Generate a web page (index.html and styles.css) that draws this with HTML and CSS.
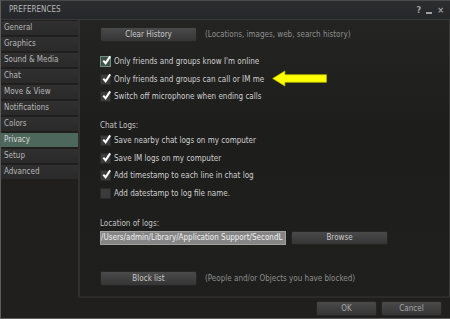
FILE: index.html
```html
<!DOCTYPE html>
<html>
<head>
<meta charset="utf-8">
<link rel="stylesheet" href="styles.css">
</head>
<body>
<div class="window">
  <div class="titlebar">
    <span class="title">PREFERENCES</span>
    <span class="controls"><span class="ctl">?</span><span class="ctl min"></span><span class="ctl">×</span></span>
  </div>
  <div class="main">
    <div class="tabs">
      <div class="tab">General</div>
      <div class="tab">Graphics</div>
      <div class="tab">Sound &amp; Media</div>
      <div class="tab">Chat</div>
      <div class="tab">Move &amp; View</div>
      <div class="tab">Notifications</div>
      <div class="tab">Colors</div>
      <div class="tab active">Privacy</div>
      <div class="tab">Setup</div>
      <div class="tab">Advanced</div>
    </div>
    <div class="panel">
      <div class="row-btn">
        <div class="btn wide">Clear History</div>
        <span class="hint">(Locations, images, web, search history)</span>
      </div>
      <div class="group g1">
        <div class="check"><span class="box focus"><svg viewBox="0 0 12 12"><path d="M2.5 6.2 L5 9 L10 1.5"/></svg></span>Only friends and groups know I'm online</div>
        <div class="check"><span class="box"><svg viewBox="0 0 12 12"><path d="M2.5 6.2 L5 9 L10 1.5"/></svg></span>Only friends and groups can call or IM me</div>
        <div class="check"><span class="box"><svg viewBox="0 0 12 12"><path d="M2.5 6.2 L5 9 L10 1.5"/></svg></span>Switch off microphone when ending calls</div>
      </div>
      <div class="label chatlogs">Chat Logs:</div>
      <div class="group">
        <div class="check"><span class="box"><svg viewBox="0 0 12 12"><path d="M2.5 6.2 L5 9 L10 1.5"/></svg></span>Save nearby chat logs on my computer</div>
        <div class="check"><span class="box"><svg viewBox="0 0 12 12"><path d="M2.5 6.2 L5 9 L10 1.5"/></svg></span>Save IM logs on my computer</div>
        <div class="check"><span class="box"><svg viewBox="0 0 12 12"><path d="M2.5 6.2 L5 9 L10 1.5"/></svg></span>Add timestamp to each line in chat log</div>
        <div class="check"><span class="box"></span>Add datestamp to log file name.</div>
      </div>
      <div class="label location">Location of logs:</div>
      <div class="row-input">
        <div class="input">/Users/admin/Library/Application Support/SecondL</div>
        <div class="btn wide">Browse</div>
      </div>
      <div class="row-btn block">
        <div class="btn wide">Block list</div>
        <span class="hint">(People and/or Objects you have blocked)</span>
      </div>
      <svg class="arrow" viewBox="0 0 60 18"><polygon points="1,9 14,1 14,5 58,5 58,13 14,13 14,17"/></svg>
    </div>
  </div>
  <div class="footer">
    <div class="btn small">OK</div>
    <div class="btn small">Cancel</div>
  </div>
</div>
</body>
</html>
```
FILE: styles.css
```css
html, body {
  margin: 0;
  padding: 0;
  background: #1f1f1e;
}
body {
  width: 450px;
  height: 319px;
  overflow: hidden;
  font-family: "DejaVu Sans Condensed", "DejaVu Sans", sans-serif;
  font-size: 8px;
  color: #d2d2d2;
}
.window {
  width: 449px;
  height: 318px;
  border-left: 1px solid #5c5c5c;
  border-bottom: 1px solid #5c5c5c;
  display: flex;
  flex-direction: column;
  background: #201f1e;
}
.titlebar {
  border-top: 1px solid #4a4a4b;
  border-bottom: 1px solid #3a3a3b;
  background: linear-gradient(#2c2d2f, #26272a);
  display: flex;
  align-items: center;
  justify-content: space-between;
  padding: 0 6px 0 8px;
  box-sizing: border-box;
  height: 20px;
}
.title {
  font-size: 8px;
  color: #b8b8b8;
  padding-bottom: 2px;
}
.controls {
  display: flex;
  align-items: center;
  gap: 5px;
  color: #a0a0a0;
  font-weight: bold;
  font-size: 9px;
}
.ctl.min {
  width: 6px;
  height: 2px;
  background: #a0a0a0;
  margin-top: 5px;
}
.main {
  display: flex;
  flex: 1;
  min-height: 0;
}
.tabs {
  width: 77px;
  display: flex;
  flex-direction: column;
  gap: 2px;
  padding-top: 1px;
}
.tab {
  height: 14px;
  line-height: 14px;
  padding-left: 3px;
  background: linear-gradient(#303030, #2a2a2a);
  color: #b8b8b8;
  font-size: 8px;
}
.tab.active {
  background: #4e675c;
  color: #d8d8d8;
}
.panel {
  position: relative;
  flex: 1;
  margin-bottom: 1px;
  border-left: 2px solid #303030;
  border-right: 1px solid #3a3a3a;
  border-bottom: 2px solid #2a2a2a;
  background: linear-gradient(#242423, #1d1d1c 40%, #1f1f1e);
  padding: 7px 0 0 20px;
  display: flex;
  flex-direction: column;
  align-items: flex-start;
}
.btn {
  box-sizing: border-box;
  height: 15px;
  line-height: 13px;
  text-align: center;
  color: #c8c8c8;
  background: linear-gradient(#4a4a4a, #353535);
  border: 1px solid #252525;
  border-radius: 2px;
  font-size: 8px;
}
.btn.wide { width: 97px; }
.btn.small { width: 61px; }
.row-btn {
  display: flex;
  align-items: center;
  gap: 8px;
}
.hint {
  color: #8e8e8e;
}
.group {
  display: flex;
  flex-direction: column;
}
.g1 { margin-top: 11px; }
.check {
  height: 17.6px;
  display: flex;
  align-items: center;
  color: #d0d0d0;
}
.box {
  position: relative;
  box-sizing: border-box;
  width: 11px;
  height: 11px;
  margin-right: 3px;
  background: #3b3b3b;
  border: 1px solid #2a2a2a;
}
.box.focus {
  background: #3f5148;
  border: 1px solid #6f8f80;
}
.box svg {
  position: absolute;
  left: 0;
  top: -2px;
  width: 11px;
  height: 11px;
  fill: none;
  stroke: #ffffff;
  stroke-width: 2.2;
}
.label {
  color: #c4c4c4;
  height: 12px;
  line-height: 12px;
}
.chatlogs { margin-top: 14px; }
.location { margin-top: 16px; }
.row-input {
  display: flex;
  align-items: center;
  gap: 5px;
  margin-top: 1px;
}
.input {
  box-sizing: border-box;
  width: 186px;
  height: 14px;
  line-height: 12px;
  background: #858585;
  border: 1px solid #a0a0a0;
  color: #f0f0f0;
  overflow: hidden;
  white-space: nowrap;
}
.row-input .btn { height: 14px; line-height: 12px; }
.row-btn.block { margin-top: 26px; }
.arrow {
  position: absolute;
  left: 191px;
  top: 50px;
  width: 58px;
  height: 17px;
  fill: #ffff00;
  stroke: #b8b800;
  stroke-width: 0.8;
}
.footer {
  height: 19px;
  display: flex;
  justify-content: flex-end;
  align-items: center;
  gap: 4px;
  padding-right: 8px;
}
.footer .btn { height: 15px; color: #a8a8a8; }
```
